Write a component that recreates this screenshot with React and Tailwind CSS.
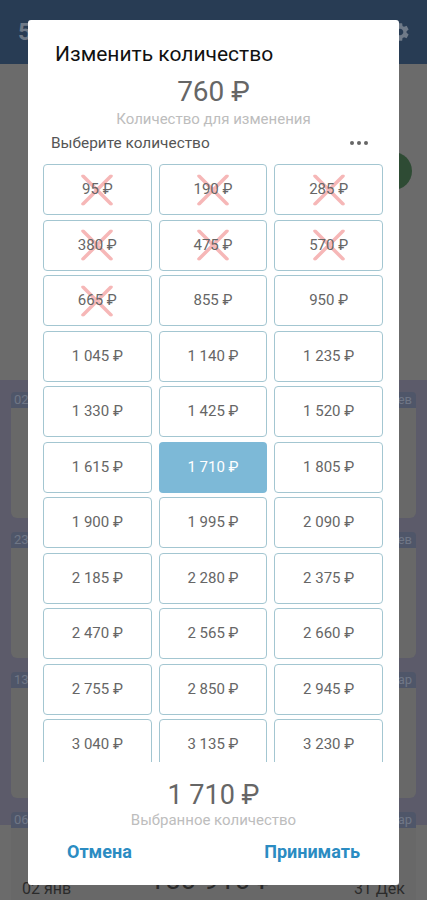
import { MdSettings } from "react-icons/md";

const fmt = (n) => String(n).replace(/\B(?=(\d{3})+(?!\d))/g, " ") + " ₽";

// amounts in steps of 95, current (760) left out
const amounts = [];
for (let k = 1; k <= 34; k++) {
  if (k !== 8) amounts.push(95 * k);
}
const blocked = [95, 190, 285, 380, 475, 570, 665];
const selected = 1710;

function Cross() {
  return (
    <svg
      className="absolute left-1/2 top-1/2 -translate-x-1/2 -translate-y-1/2"
      width="32"
      height="31"
      viewBox="0 0 32 31"
    >
      <path d="M2 1.5 L30 29.5 M30 1.5 L2 29.5" stroke="#f6b7b7" strokeWidth="3.5" strokeLinecap="round" />
    </svg>
  );
}

function BgCard({ left, right }) {
  return (
    <div className="flex flex-col">
      <div className="flex justify-between">
        <span className="h-[16px] px-[3px] rounded-t-[4px] bg-[#4f5669] text-[#6f7686] text-[13px] leading-[16px]">{left}</span>
        <span className="h-[16px] px-[4px] rounded-t-[4px] bg-[#4f5669] text-[#6f7686] text-[13px] leading-[16px]">{right}</span>
      </div>
      <div className="h-[110px] rounded-b-[6px] bg-[#686868]" />
    </div>
  );
}

export default function App() {
  return (
    <div className="relative h-[900px] w-[427px] overflow-hidden bg-[#6b6b6b] font-['Roboto','Liberation_Sans',sans-serif]">
      {/* background screen (dimmed) */}
      <div className="h-[64px] bg-[#283c54] flex items-center justify-between pl-[18px] pr-[16px]">
        <span className="text-[24px] font-bold text-[#6f7a88]">5</span>
        <MdSettings className="text-[#6f7a88]" size={22} />
      </div>
      <div className="h-[316px] flex justify-end pr-[15px] pt-[88px]">
        <div className="w-[38px] h-[38px] rounded-full bg-[#2e4b34]" />
      </div>
      <div className="h-[445px] bg-[#5c5b6a] px-[11px] pt-[12px] flex flex-col gap-[14px]">
        <BgCard left="02" right="ев" />
        <BgCard left="23" right="ев" />
        <BgCard left="13" right="ар" />
        <BgCard left="06" right="ар" />
      </div>
      <div className="px-[22px] pt-[15px]">
        <div className="w-[10px] h-[17px] rounded-[4px] bg-[#4e7a4e]" />
        <div className="flex justify-between items-start mt-[22px]">
          <span className="text-[16px] text-[#2b2b2b] leading-[20px]">02 янв</span>
          <span className="text-[28px] text-[#2b2b2b] leading-[30px] mt-[-14px]">150 910 ₽</span>
          <span className="text-[16px] text-[#2b2b2b] leading-[20px]">31 Дек</span>
        </div>
      </div>

      {/* dialog */}
      <div className="absolute left-[28px] top-[20px] w-[371px] h-[865px] bg-white rounded-[3px] flex flex-col">
        <h2 className="pt-[21px] pl-[27px] text-[21px] leading-[26px] text-[#111]">Изменить количество</h2>
        <div className="mt-[9px] text-center text-[28px] leading-[32px] text-[#666]">760 ₽</div>
        <div className="mt-[1px] text-center text-[15px] leading-[20px] text-[#bdbdbd]">Количество для изменения</div>
        <div className="mt-[4px] flex items-center justify-between pl-[23px] pr-[31px]">
          <span className="text-[15.4px] leading-[20px] text-[#555]">Выберите количество</span>
          <span className="flex gap-[3px]">
            <span className="w-[4px] h-[4px] rounded-full bg-[#666]" />
            <span className="w-[4px] h-[4px] rounded-full bg-[#666]" />
            <span className="w-[4px] h-[4px] rounded-full bg-[#666]" />
          </span>
        </div>
        <div className="mt-[11px] h-[598px] overflow-hidden px-[15px] pr-[16px]">
          <div className="grid grid-cols-3 gap-x-[7px] gap-y-[4.5px]">
            {amounts.map((a) => {
              const isSel = a === selected;
              return (
                <div
                  key={a}
                  className={
                    isSel
                      ? "relative h-[51px] rounded-[4px] bg-[#7db9d7] flex items-center justify-center"
                      : "relative h-[51px] rounded-[4px] border border-[#a3c6d1] bg-white flex items-center justify-center"
                  }
                >
                  {blocked.includes(a) && <Cross />}
                  <span className={isSel ? "relative text-[15px] text-white" : "relative text-[15px] text-[#666]"}>
                    {fmt(a)}
                  </span>
                </div>
              );
            })}
          </div>
        </div>
        <div className="mt-[17px] text-center text-[27px] leading-[32px] text-[#666]">1 710 ₽</div>
        <div className="text-center text-[15px] leading-[18px] text-[#bdbdbd]">Выбранное количество</div>
        <div className="mt-[12px] flex justify-between px-[39px]">
          <button className="text-[18px] leading-[22px] font-bold text-[#2b8cc2]">Отмена</button>
          <button className="text-[18px] leading-[22px] font-bold text-[#2b8cc2]">Принимать</button>
        </div>
      </div>
    </div>
  );
}
